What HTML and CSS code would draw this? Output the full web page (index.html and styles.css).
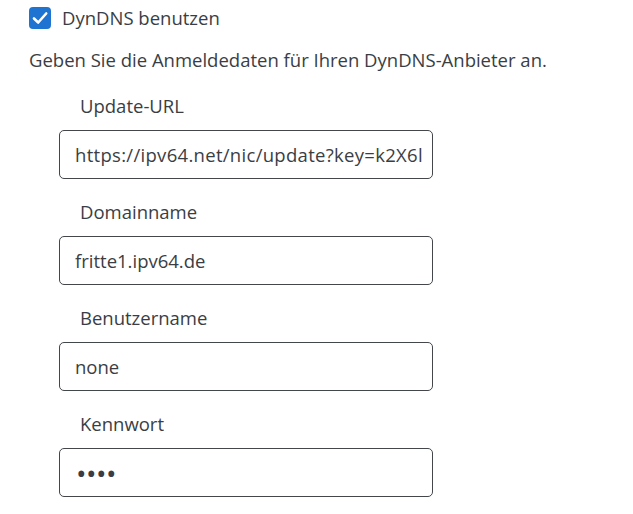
FILE: index.html
```html
<!DOCTYPE html>
<html lang="de">
<head>
<meta charset="utf-8">
<link rel="stylesheet" href="styles.css">
</head>
<body>
<div class="page">
  <label class="check-row">
    <span class="checkbox">
      <svg viewBox="0 0 22 22" width="22" height="22"><rect x="0" y="0" width="22" height="22" rx="4" fill="#1f74d1"/><path d="M5 11.5 L9.2 15.5 L17.2 6.5" fill="none" stroke="#fff" stroke-width="2.6" stroke-linecap="round" stroke-linejoin="round"/></svg>
    </span>
    <span class="check-label">DynDNS benutzen</span>
  </label>
  <p class="intro">Geben Sie die Anmeldedaten für Ihren DynDNS-Anbieter an.</p>
  <div class="fields">
    <div class="field">
      <label class="field-label" for="url">Update-URL</label>
      <input class="field-input url" id="url" type="text" value="https://ipv64.net/nic/update?key=k2X6l">
    </div>
    <div class="field">
      <label class="field-label" for="dom">Domainname</label>
      <input class="field-input" id="dom" type="text" value="fritte1.ipv64.de">
    </div>
    <div class="field">
      <label class="field-label" for="usr">Benutzername</label>
      <input class="field-input" id="usr" type="text" value="none">
    </div>
    <div class="field">
      <label class="field-label" for="pw">Kennwort</label>
      <input class="field-input pw" id="pw" type="password" value="none">
    </div>
  </div>
</div>
</body>
</html>
```
FILE: styles.css
```css
html, body {
  margin: 0;
  padding: 0;
  background: #ffffff;
}
body {
  font-family: "Open Sans", "Liberation Sans", sans-serif;
  font-size: 18.5px;
  color: #3a3e44;
}
.page {
  display: flex;
  flex-direction: column;
  padding: 7px 0 0 29px;
}
.check-row {
  display: flex;
  align-items: center;
  gap: 11px;
  height: 22px;
}
.checkbox {
  display: block;
  width: 22px;
  height: 22px;
}
.checkbox svg { display: block; }
.check-label {
  line-height: 22px;
}
.intro {
  margin: 19px 0 0 0;
  line-height: 24px;
}
.fields {
  display: flex;
  flex-direction: column;
  gap: 21px;
  margin-top: 22px;
  padding-left: 30px;
}
.field {
  display: flex;
  flex-direction: column;
  gap: 12px;
}
.field-label {
  line-height: 24px;
  padding-left: 21px;
}
.field-input {
  box-sizing: border-box;
  width: 374px;
  height: 49px;
  border: 1px solid #43474c;
  border-radius: 5px;
  padding: 0 15px;
  font-family: inherit;
  font-size: 18.5px;
  color: #3a3e44;
  background: #fff;
  outline: none;
}
.url {
  padding-right: 1px;
  letter-spacing: 0.3px;
}
.pw {
  padding-left: 16px;
  letter-spacing: -0.5px;
  font-size: 28px;
}
```
